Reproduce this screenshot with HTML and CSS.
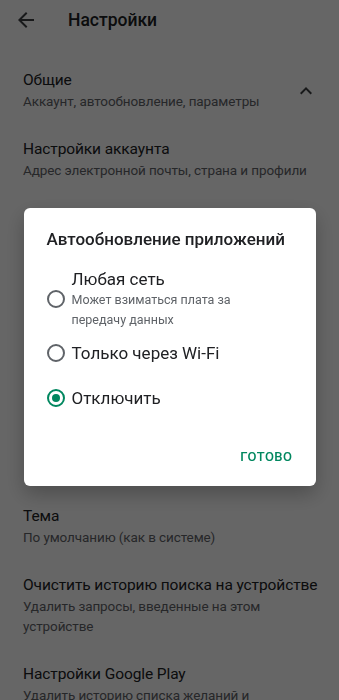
FILE: index.html
```html
<!DOCTYPE html>
<html lang="ru">
<head>
	<meta charset="UTF-8">
	<title>Настройки</title>
	<link rel="stylesheet" href="styles.css">
</head>
<body>
	<div class="top">
		<svg class="back" width="24" height="24" viewBox="0 0 24 24"><path d="M20 11H7.83l5.59-5.59L12 4l-8 8 8 8 1.41-1.41L7.83 13H20v-2z" fill="#3c4043"/></svg>
		<p class="top_title">Настройки</p>
	</div>
	<div class="list">
		<div class="item">
			<div class="item_txt">
				<p class="item_title">Общие</p>
				<p class="item_sub">Аккаунт, автообновление, параметры</p>
			</div>
			<svg class="chevron" width="24" height="24" viewBox="0 0 24 24"><path d="M12 8l-6 6 1.41 1.41L12 10.83l4.59 4.58L18 14z" fill="#3c4043"/></svg>
		</div>
		<div class="item">
			<div class="item_txt">
				<p class="item_title">Настройки аккаунта</p>
				<p class="item_sub">Адрес электронной почты, страна и профили</p>
			</div>
		</div>
		<div class="gap"></div>
		<div class="item">
			<div class="item_txt">
				<p class="item_title">Тема</p>
				<p class="item_sub">По умолчанию (как в системе)</p>
			</div>
		</div>
		<div class="item">
			<div class="item_txt">
				<p class="item_title">Очистить историю поиска на устройстве</p>
				<p class="item_sub narrow">Удалить запросы, введенные на этом устройстве</p>
			</div>
		</div>
		<div class="item">
			<div class="item_txt">
				<p class="item_title">Настройки Google Play</p>
				<p class="item_sub">Удалить историю списка желаний и</p>
			</div>
		</div>
	</div>

	<div class="scrim">
		<div class="dialog">
			<p class="dlg_title">Автообновление приложений</p>
			<div class="option">
				<span class="radio"></span>
				<div class="opt_txt">
					<p class="opt_title">Любая сеть</p>
					<p class="opt_sub">Может взиматься плата за передачу данных</p>
				</div>
			</div>
			<div class="option">
				<span class="radio"></span>
				<div class="opt_txt">
					<p class="opt_title">Только через Wi-Fi</p>
				</div>
			</div>
			<div class="option">
				<span class="radio on"></span>
				<div class="opt_txt">
					<p class="opt_title">Отключить</p>
				</div>
			</div>
			<div class="dlg_foot">
				<a href="javascript:void(0)" class="done_btn">Готово</a>
			</div>
		</div>
	</div>
</body>
</html>
```

FILE: styles.css
```css
html,body{background: #fff;}
html,body,div,p,span,a{margin: 0; padding: 0;font-family: Roboto,"Noto Sans",Arial,sans-serif;}
body{width: 339px;height: 700px;overflow: hidden;}

.top{display: flex;align-items: center;height: 40px;padding: 0 14px;}
.back{flex: none;}
.top_title{margin-left: 30px;font-size: 17.5px;font-weight: 500;color: #202124;}

.list{padding-top: 16px;}
.item{display: flex;align-items: center;padding: 14px 21px 14px 23px;}
.item_txt{flex: 1;min-width: 0;white-space: nowrap;}
.item_title{font-size: 15.5px;line-height: 20px;color: #202124;letter-spacing: -0.1px;}
.item_sub{font-size: 13.5px;line-height: 20px;color: #5f6368;margin-top: 1px;letter-spacing: -0.1px;}
.item_sub.narrow{white-space: normal;width: 250px;}
.chevron{flex: none;}
.gap{height: 298px;}

.scrim{position: fixed;top: 0;left: 0;right: 0;bottom: 0;background: rgba(0,0,0,0.6);display: flex;align-items: center;justify-content: center;padding-bottom: 6px;}
.dialog{width: 292px;background: #fff;border-radius: 6px;padding: 20px 0 11px;box-shadow: 0 8px 20px rgba(0,0,0,0.25);}
.dlg_title{padding: 0 23px;font-size: 17px;line-height: 22px;font-weight: 500;color: #202124;margin-bottom: 18px;}
.option{display: flex;align-items: center;min-height: 45px;padding: 0 23px;}
.radio{flex: none;width: 14px;height: 14px;border: 2px solid #5f6368;border-radius: 50%;margin: 0 7px 0 0;position: relative;}
.radio.on{border-color: #01875f;}
.radio.on:after{content: "";position: absolute;top: 3px;left: 3px;width: 8px;height: 8px;border-radius: 50%;background: #01875f;}
.opt_title{font-size: 17px;line-height: 22px;color: #202124;}
.opt_sub{font-size: 12.5px;line-height: 20px;color: #5f6368;width: 175px;}
.dlg_foot{display: flex;justify-content: flex-end;padding: 19px 15px 0;}
a.done_btn{display: block;height: 36px;line-height: 36px;padding: 0 8px;font-size: 13px;font-weight: 500;letter-spacing: 0.5px;text-transform: uppercase;color: #01875f;text-decoration: none;}
```
